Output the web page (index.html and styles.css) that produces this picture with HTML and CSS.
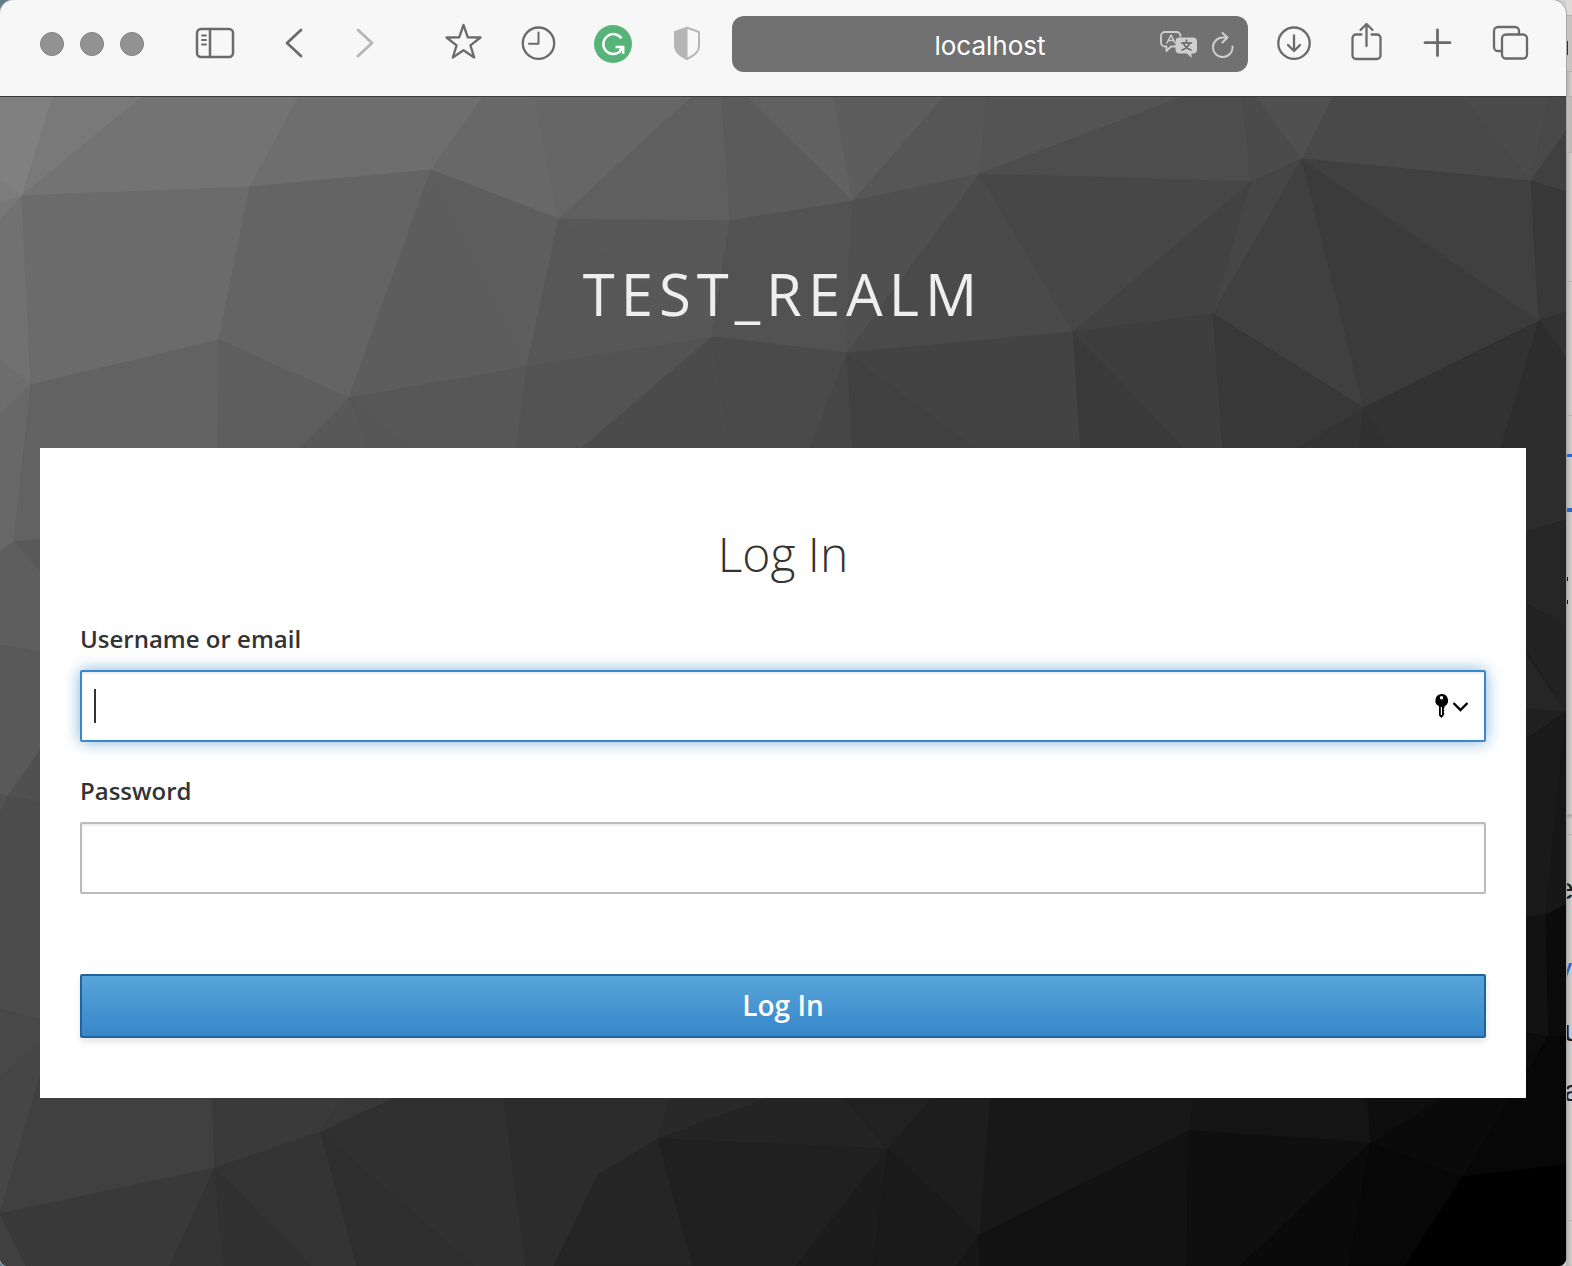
FILE: index.html
```
<!DOCTYPE html>
<html lang="en">
<head>
<meta charset="utf-8">
<meta name="viewport" content="width=device-width, initial-scale=1">
<title>Log in to test_realm</title>
<link rel="stylesheet" href="styles.css">
</head>
<body>
<div class="desktop">
  <div class="window">
    <header class="toolbar">
      <div class="lights"><span class="light"></span><span class="light"></span><span class="light"></span></div>
      <button class="tool tool-sidebar" type="button" aria-label="Sidebar">
        <svg viewBox="0 0 40 36"><rect x="2" y="4" width="36" height="28" rx="4" stroke-width="2.5"/><path d="M15 4v28" stroke-width="2.5"/><path d="M7 10.500h4M7 15h4M7 19.500h4" stroke-width="1.8"/></svg>
      </button>
      <button class="tool tool-back" type="button" aria-label="Back">
        <svg viewBox="0 0 40 36"><path d="M27 5L13 18l14 13" stroke-width="2.8"/></svg>
      </button>
      <button class="tool tool-forward" type="button" aria-label="Forward" disabled>
        <svg viewBox="0 0 40 36"><path d="M13 5l14 13-14 13" stroke-width="2.8"/></svg>
      </button>
      <div class="extensions">
        <button class="tool" type="button" aria-label="Bookmarks">
          <svg viewBox="0 0 40 36"><path d="M20.500 0L24.800 12.300 37.500 12.500 27.400 20.300 31.200 32.500 20.500 25.200 9.800 32.500 13.600 20.300 3.500 12.500 16.200 12.300Z" stroke-width="2.3"/></svg>
        </button>
        <button class="tool" type="button" aria-label="History">
          <svg viewBox="0 0 40 36"><circle cx="20.500" cy="18.200" r="15.700" stroke-width="2.3"/><path d="M20.500 7.500V18.800H11" stroke-width="2"/></svg>
        </button>
        <button class="tool" type="button" aria-label="Grammarly">
          <svg viewBox="0 0 40 36"><circle class="brand" cx="20" cy="19" r="19"/><path class="knock" d="M28.500 13.300A10 10 0 1 0 27.600 26M22.500 22h7.700v6.800M29.500 23l-3 3" stroke-width="2.5"/></svg>
        </button>
        <button class="tool shield" type="button" aria-label="Privacy report">
          <svg viewBox="0 0 40 36"><path d="M19 2.700L31 7V21.500C31 27 25.500 31 19 34 12.500 31 7 27 7 21.500V7Z" stroke-width="2"/><path class="solid" d="M19.500 2.500L7 7V21.500C7 27 12.500 31 19.500 34Z"/></svg>
        </button>
      </div>
      <div class="address">
        <input class="address-input" type="text" value="localhost" aria-label="Address">
        <div class="address-tools">
          <button class="mini" type="button" aria-label="Translate">
            <svg width="38" height="28" viewBox="0 0 38 28"><path d="M16 15.500L11 15.500 6.500 20V15.500H5A4 4 0 0 1 1 11.500V5A4 4 0 0 1 5 1H16.500A4 4 0 0 1 20.500 5" stroke-width="1.800"/><path d="M7 12L11 4l4 8M8.500 9.500h5" stroke-width="1.500"/><path class="bubble" d="M19.500 6.500H33A4 4 0 0 1 37 10.500V18.500A4 4 0 0 1 33 22.500H31.500V27L27 22.500H19.500A4 4 0 0 1 15.500 18.500V10.500A4 4 0 0 1 19.500 6.500Z"/><path class="bubble-ink" d="M26.500 9v3M21.500 12h10M23.500 12.500C25 16 28 18 31 19M29.500 12.500C28 16 25 18 22 19" stroke-width="1.600"/></svg>
          </button>
          <button class="mini" type="button" aria-label="Reload">
            <svg width="22" height="26" viewBox="0 0 22 26"><path d="M20.500 14.500A9.800 9.800 0 1 1 10.800 5.500H15M10.500 1l5 4.500-5 5" stroke-width="2"/></svg>
          </button>
        </div>
      </div>
      <div class="actions">
        <button class="tool" type="button" aria-label="Downloads">
          <svg viewBox="0 0 40 36"><circle cx="20" cy="18.200" r="15.700" stroke-width="2.300"/><path d="M20 10.500v15M14 20l6 6 6-6" stroke-width="2.300"/></svg>
        </button>
        <button class="tool" type="button" aria-label="Share">
          <svg viewBox="0 0 40 36"><path d="M15.500 9.500H10A3.500 3.500 0 0 0 6.500 13V30.500A3.500 3.500 0 0 0 10 34H31A3.500 3.500 0 0 0 34.500 30.500V13A3.500 3.500 0 0 0 31 9.500H25.500M20.500 21V-.5M14.500 5l6-6 6 6" stroke-width="2.300"/></svg>
        </button>
        <button class="tool" type="button" aria-label="New tab">
          <svg viewBox="0 0 40 36"><path d="M19.500 5v25.500M7 17.700h25" stroke-width="2.800"/></svg>
        </button>
        <button class="tool" type="button" aria-label="Show tabs">
          <svg viewBox="0 0 40 36"><path d="M11 26H8A4 4 0 0 1 4 22V6A4 4 0 0 1 8 2H25A4 4 0 0 1 29 6V9" stroke-width="2.300"/><rect x="12" y="9.500" width="25" height="24" rx="4" stroke-width="2.300"/></svg>
        </button>
      </div>
    </header>

    <main class="page">
      <svg class="facets" viewBox="0 97 1566 1169" preserveAspectRatio="none" aria-hidden="true">
        <!-- upper band -->
        <polygon color="#808080" points="0,97 53,97 22,196 0,180"/>
        <polygon color="#797979" points="53,97 142,97 22,196"/>
        <polygon color="#737373" points="142,97 299,97 250,187 22,196"/>
        <polygon color="#6e6e6e" points="299,97 483,97 431,170 250,187"/>
        <polygon color="#686868" points="483,97 535,97 559,219 431,170"/>
        <polygon color="#666666" points="535,97 692,97 559,219"/>
        <polygon color="#5f5f5f" points="692,97 722,97 730,221 559,219"/>
        <polygon color="#5b5b5b" points="722,97 748,97 853,201 730,221"/>
        <polygon color="#616161" points="748,97 834,97 853,201"/>
        <polygon color="#5d5d5d" points="834,97 944,97 853,201"/>
        <polygon color="#565656" points="944,97 987,97 980,174 853,201"/>
        <polygon color="#545454" points="987,97 1183,97 980,174"/>
        <polygon color="#4d4d4d" points="1183,97 1243,97 1251,182 980,174"/>
        <polygon color="#4b4b4b" points="1243,97 1257,97 1302,159 1251,182"/>
        <polygon color="#505050" points="1257,97 1333,97 1302,159"/>
        <polygon color="#494949" points="1333,97 1463,97 1531,181 1302,159"/>
        <polygon color="#4b4b4b" points="1463,97 1550,97 1531,181"/>
        <polygon color="#494949" points="1550,97 1566,97 1566,131 1531,181"/>
        <polygon color="#404040" points="1566,131 1566,192 1531,181"/>
        <!-- middle band -->
        <polygon color="#7c7c7c" points="0,180 22,196 0,204"/>
        <polygon color="#777777" points="0,204 22,196 0,220"/>
        <polygon color="#717171" points="0,220 22,196 31,385 0,361"/>
        <polygon color="#6b6b6b" points="22,196 250,187 219,340 31,385"/>
        <polygon color="#646464" points="250,187 431,170 349,398 219,340"/>
        <polygon color="#5d5d5d" points="431,170 527,367 349,398"/>
        <polygon color="#5e5e5e" points="431,170 559,219 527,367"/>
        <polygon color="#575757" points="559,219 712,337 527,367"/>
        <polygon color="#585858" points="559,219 730,221 712,337"/>
        <polygon color="#525252" points="730,221 853,201 847,353 712,337"/>
        <polygon color="#505050" points="853,201 980,174 847,353"/>
        <polygon color="#4a4a4a" points="980,174 1073,332 847,353"/>
        <polygon color="#474747" points="980,174 1251,182 1073,332"/>
        <polygon color="#424242" points="1251,182 1213,314 1073,332"/>
        <polygon color="#464646" points="1251,182 1302,159 1213,314"/>
        <polygon color="#404040" points="1302,159 1364,408 1213,314"/>
        <polygon color="#3b3b3b" points="1302,159 1539,321 1364,408"/>
        <polygon color="#404040" points="1302,159 1531,181 1539,321"/>
        <polygon color="#383838" points="1531,181 1566,192 1566,312 1539,321"/>
        <polygon color="#323232" points="1539,321 1566,312 1566,357"/>
        <!-- band above the card -->
        <polygon color="#6d6d6d" points="0,361 31,385 0,414"/>
        <polygon color="#686868" points="0,414 31,385 14,542 0,552"/>
        <polygon color="#626262" points="31,385 219,340 218,452 40,540 14,542"/>
        <polygon color="#5e5e5e" points="219,340 349,398 296,452 218,452"/>
        <polygon color="#585858" points="349,398 371,452 296,452"/>
        <polygon color="#565656" points="349,398 415,452 371,452"/>
        <polygon color="#575757" points="349,398 527,367 516,452 415,452"/>
        <polygon color="#535353" points="527,367 712,337 577,452 516,452"/>
        <polygon color="#4b4b4b" points="712,337 731,452 577,452"/>
        <polygon color="#4a4a4a" points="712,337 847,353 809,452 731,452"/>
        <polygon color="#464646" points="847,353 853,452 809,452"/>
        <polygon color="#404040" points="847,353 982,452 853,452"/>
        <polygon color="#434343" points="847,353 1073,332 1081,452 982,452"/>
        <polygon color="#3a3a3a" points="1073,332 1188,452 1081,452"/>
        <polygon color="#3e3e3e" points="1073,332 1213,314 1223,452 1188,452"/>
        <polygon color="#383838" points="1213,314 1364,408 1292,452 1223,452"/>
        <polygon color="#343434" points="1364,408 1359,452 1292,452"/>
        <polygon color="#303030" points="1364,408 1391,452 1359,452"/>
        <polygon color="#323232" points="1364,408 1539,321 1500,452 1391,452"/>
        <polygon color="#2d2d2d" points="1539,321 1566,357 1566,520 1480,545 1500,452"/>
        <!-- left of the card -->
        <polygon color="#595959" points="14,542 60,538 60,595"/>
        <polygon color="#5e5e5e" points="0,552 14,542 60,595 60,655 0,645"/>
        <polygon color="#595959" points="0,645 60,655 60,722 8,796 0,794"/>
        <polygon color="#505050" points="60,722 60,806 8,796"/>
        <polygon color="#535353" points="0,794 8,796 0,813"/>
        <polygon color="#4c4c4c" points="8,796 60,806 60,1025 0,1009 0,813"/>
        <polygon color="#484848" points="0,1009 60,1025 0,1077"/>
        <polygon color="#464646" points="0,1077 60,1025 0,1214"/>
        <!-- right of the card -->
        <polygon color="#262626" points="1480,545 1566,520 1566,627 1480,575"/>
        <polygon color="#222222" points="1480,575 1566,627 1566,712"/>
        <polygon color="#262626" points="1480,590 1566,712 1480,705"/>
        <polygon color="#202020" points="1480,705 1566,712 1480,770"/>
        <polygon color="#1a1a1a" points="1480,770 1566,712 1546,915 1480,922"/>
        <polygon color="#171717" points="1566,712 1566,905 1546,915"/>
        <polygon color="#121212" points="1480,922 1546,915 1549,1037 1480,1023"/>
        <polygon color="#0b0b0b" points="1546,915 1566,905 1566,1037 1549,1037"/>
        <polygon color="#0d0d0d" points="1480,1023 1549,1037 1445,1120"/>
        <!-- below the card -->
        <polygon color="#404040" points="40,1076 60,1025 212,1090 215,1168 0,1214"/>
        <polygon color="#3a3a3a" points="212,1090 345,1090 321,1132 215,1168"/>
        <polygon color="#383838" points="345,1090 412,1090 321,1132"/>
        <polygon color="#404040" points="0,1214 26,1266 0,1266"/>
        <polygon color="#393939" points="0,1214 215,1168 170,1266 26,1266"/>
        <polygon color="#343434" points="215,1168 224,1266 170,1266"/>
        <polygon color="#313131" points="215,1168 312,1266 224,1266"/>
        <polygon color="#343434" points="215,1168 321,1132 357,1266 312,1266"/>
        <polygon color="#2e2e2e" points="321,1132 474,1266 357,1266"/>
        <polygon color="#303030" points="321,1132 412,1090 503,1090 526,1266 474,1266"/>
        <polygon color="#2c2c2c" points="503,1090 672,1090 658,1139 598,1175 554,1266 526,1266"/>
        <polygon color="#292929" points="672,1090 790,1090 658,1139"/>
        <polygon color="#242424" points="790,1090 836,1090 888,1149 658,1139"/>
        <polygon color="#252525" points="658,1139 693,1266 554,1266 598,1175"/>
        <polygon color="#202020" points="658,1139 888,1149 796,1266 693,1266"/>
        <polygon color="#212121" points="836,1090 940,1090 888,1149"/>
        <polygon color="#1d1d1d" points="940,1090 991,1090 980,1235 888,1149"/>
        <polygon color="#1c1c1c" points="888,1149 873,1266 796,1266"/>
        <polygon color="#1a1a1a" points="888,1149 980,1235 957,1266 873,1266"/>
        <polygon color="#181818" points="991,1090 1195,1090 1189,1131 980,1235"/>
        <polygon color="#161616" points="980,1235 980,1266 957,1266"/>
        <polygon color="#121212" points="980,1235 1189,1131 1187,1266 980,1266"/>
        <polygon color="#141414" points="1195,1090 1367,1090 1371,1143 1189,1131"/>
        <polygon color="#0f0f0f" points="1189,1131 1371,1143 1240,1266 1187,1266"/>
        <polygon color="#0e0e0e" points="1367,1090 1457,1090 1371,1143"/>
        <polygon color="#0a0a0a" points="1457,1090 1515,1090 1463,1177 1371,1143"/>
        <polygon color="#0a0a0a" points="1371,1143 1349,1266 1240,1266"/>
        <polygon color="#070707" points="1371,1143 1463,1177 1405,1266 1349,1266"/>
        <polygon color="#070707" points="1515,1090 1549,1037 1566,1037 1566,1165 1463,1177"/>
        <polygon color="#000000" points="1463,1177 1566,1165 1566,1266 1405,1266"/>
      </svg>

      <h1 class="realm">test_realm</h1>

      <form class="card">
        <h2 class="card-title">Log In</h2>
        <div class="field">
          <label for="username">Username or email</label>
          <div class="control">
            <input id="username" class="text is-focused" type="text" autocomplete="off">
            <span class="caret"></span>
            <svg class="keychain" width="36" height="26" viewBox="0 0 36 26" aria-hidden="true"><path fill-rule="evenodd" d="M7.500 1A6.500 6.500 0 0 1 10.500 13.300V15l-1 1 1 1.500-1 1.500 1 1.500-1 2L7.500 25 5 22.500V13.300A6.500 6.500 0 0 1 7.500 1ZM7.500 3A1.700 1.700 0 1 0 7.500 6.400 1.700 1.700 0 0 0 7.500 3ZM6.800 14V22H8V14Z"/><path class="chevron" d="M19.500 10l7 7 7-7"/></svg>
          </div>
        </div>
        <div class="field">
          <label for="password">Password</label>
          <input id="password" class="text" type="password">
        </div>
        <button class="submit" type="button">Log In</button>
      </form>
    </main>
  </div>

  <aside class="behind" aria-hidden="true">
    <div class="strip strip-top"></div>
    <div class="strip strip-tab"><span class="tick"></span></div>
    <div class="strip strip-bar"></div>
    <div class="strip strip-shade"></div>
    <div class="strip strip-a"></div>
    <div class="strip strip-b"></div>
    <div class="strip strip-c"></div>
    <div class="strip strip-blue"></div>
    <div class="strip strip-d"><span class="dot"></span><span class="dot"></span></div>
    <div class="strip strip-e"></div>
    <div class="strip strip-text">
      <p>e</p>
      <p class="link">v</p>
      <p class="short">u</p>
      <p class="short">a</p>
    </div>
    <div class="strip strip-rest"></div>
  </aside>
</div>
</body>
</html>
```
FILE: styles.css
```
* {
  box-sizing: border-box;
}

body {
  margin: 0;
  background: #cfcdcb;
  color: #333;
  font-family: "Open Sans", "Noto Sans", sans-serif;
}

button,
input {
  font: inherit;
}

.desktop {
  display: grid;
  grid-template-columns: minmax(0, 1fr) 6px;
  min-height: 100vh;
  background: linear-gradient(90deg, #5f7c88 50%, #d4d2d0 50%);
}

.window {
  position: relative;
  z-index: 1;
  display: flex;
  flex-direction: column;
  overflow: hidden;
  border-radius: 14px 14px 8px 8px;
  background: #f7f7f7;
  box-shadow: 0 0 0 1px #a5a5a5;
}

/* Browser toolbar */

.toolbar {
  display: flex;
  align-items: flex-start;
  height: 97px;
  padding: 16px 36px 0 40px;
  border-bottom: 1px solid #3a3a3a;
}

.lights {
  display: flex;
  gap: 16px;
  margin-top: 16px;
}

.light {
  width: 24px;
  height: 24px;
  border: 1px solid #808080;
  border-radius: 50%;
  background: #929292;
}

.tool,
.mini {
  flex: none;
  padding: 0;
  border: 0;
  background: none;
}

.tool {
  width: 40px;
  height: 36px;
  margin-top: 9px;
}

.tool svg {
  display: block;
  width: 40px;
  height: 36px;
  overflow: visible;
}

.tool svg,
.mini svg {
  fill: none;
  stroke: #6b6b6b;
  stroke-linecap: round;
  stroke-linejoin: round;
}

.tool-sidebar {
  margin-left: 51px;
}

.tool-back {
  margin-left: 39px;
}

.tool-forward {
  margin-left: 31px;
}

.tool-forward svg,
.shield svg {
  stroke: #b6b6b6;
}

.extensions {
  display: flex;
  gap: 35px;
  margin: 0 24px 0 58px;
}

.tool .brand {
  fill: #57b478;
  stroke: none;
}

.tool .knock {
  stroke: #fff;
  stroke-linecap: butt;
  stroke-linejoin: miter;
}

.tool .solid {
  fill: #b6b6b6;
  stroke: none;
}

.address {
  position: relative;
  flex: 1;
  min-width: 0;
  height: 56px;
}

.address-input {
  width: 100%;
  height: 56px;
  padding: 3px 90px 0;
  border: 0;
  border-radius: 12px;
  outline: 0;
  background: #717171;
  color: #fff;
  font-family: Inter, "Liberation Sans", sans-serif;
  font-size: 26px;
  text-align: center;
}

.address-tools {
  position: absolute;
  top: 15px;
  right: 14px;
  display: flex;
  gap: 14px;
}

.mini svg {
  display: block;
  stroke: #cfcfcf;
}

.mini .bubble {
  fill: #cfcfcf;
  stroke: none;
}

.mini .bubble-ink {
  stroke: #666;
}

.actions {
  display: flex;
  gap: 32px;
  margin-left: 26px;
}

.actions .tool {
  position: relative;
}

/* Login page */

.page {
  position: relative;
  z-index: 0;
  flex: 1;
  padding: 157px 40px 120px;
  background: linear-gradient(150deg, #777, #333 50%, #000);
}

.facets {
  position: absolute;
  inset: 0;
  z-index: -1;
  width: 100%;
  height: 100%;
}

.facets polygon {
  fill: currentColor;
  stroke: currentColor;
  stroke-width: 1;
}

.realm {
  margin: 0 0 114px;
  color: #eee;
  font-size: 58px;
  font-weight: 400;
  line-height: 80px;
  letter-spacing: 6px;
  text-align: center;
  text-transform: uppercase;
}

.card {
  padding: 78px 40px 60px;
  background: #fff;
}

.card-title {
  margin: 0 0 37px;
  font-size: 48px;
  font-weight: 300;
  line-height: 56px;
  text-align: center;
}

.field {
  margin-bottom: 29px;
}

.field label {
  display: block;
  margin-bottom: 11px;
  font-size: 24px;
  font-weight: 600;
  line-height: 40px;
}

.control {
  position: relative;
}

.text {
  display: block;
  width: 100%;
  height: 72px;
  padding: 0 12px;
  border: 2px solid #bbb;
  border-radius: 2px;
  outline: 0;
  background: #fff;
  box-shadow: inset 0 2px 2px rgba(3, 3, 3, 0.08);
  font-size: 24px;
}

.is-focused {
  border-color: #3a87cd;
  box-shadow: inset 0 2px 2px rgba(3, 3, 3, 0.08), 0 0 16px rgba(0, 105, 185, 0.5);
}

.caret {
  position: absolute;
  top: 19px;
  left: 14px;
  width: 2px;
  height: 34px;
  background: #333;
}

.keychain {
  position: absolute;
  top: 23px;
  right: 16px;
}

.chevron {
  fill: none;
  stroke: #000;
  stroke-width: 2.4;
}

.submit {
  display: block;
  width: 100%;
  height: 64px;
  margin-top: 80px;
  padding: 0 0 2px;
  border: 2px solid #21639e;
  border-radius: 2px;
  background: linear-gradient(#58a5da, #3787c9);
  box-shadow: 0 4px 6px rgba(3, 3, 3, 0.1);
  color: #fff;
  font-size: 28px;
  font-weight: 600;
}

/* Sliver of the window lying behind */

.behind {
  display: flex;
  flex-direction: column;
  overflow: hidden;
  background: #cfcdcc;
  box-shadow: inset 3px 0 3px rgba(0, 0, 0, 0.12);
  color: #1c1c1c;
  font-family: "Liberation Sans", Arial, sans-serif;
  font-size: 30px;
}

.strip {
  flex: none;
  border-bottom: 1px solid #b3b1b0;
}

.strip-top {
  height: 16px;
  background: #dddbda;
}

.strip-tab {
  height: 56px;
  padding-top: 25px;
  background: #c6c5c4;
}

.tick {
  display: block;
  width: 2px;
  height: 14px;
  background: #333;
}

.strip-bar {
  height: 25px;
}

.strip-shade {
  height: 56px;
  background: #bebcbb;
}

.strip-a {
  height: 129px;
}

.strip-b {
  height: 134px;
}

.strip-c {
  height: 41px;
  border-bottom: 3px solid #2f62c8;
}

.strip-blue {
  height: 55px;
  border-bottom: 4px solid #2f62c8;
}

.strip-d {
  display: flex;
  flex-direction: column;
  gap: 19px;
  height: 303px;
  padding-top: 65px;
  box-shadow: 0 2px 3px rgba(0, 0, 0, 0.2);
}

.dot {
  width: 2px;
  height: 4px;
  background: #111;
}

.strip-e {
  height: 20px;
}

.strip-text {
  height: 386px;
  padding-top: 14px;
}

.strip-text p {
  margin: 0 0 0 -9px;
  line-height: 80px;
}

.strip-text .short {
  margin-left: -2px;
  line-height: 60px;
}

.strip-text .link {
  margin-bottom: -8px;
  color: #2f62c8;
}

.strip-rest {
  flex: 1;
  border: 0;
}
```
